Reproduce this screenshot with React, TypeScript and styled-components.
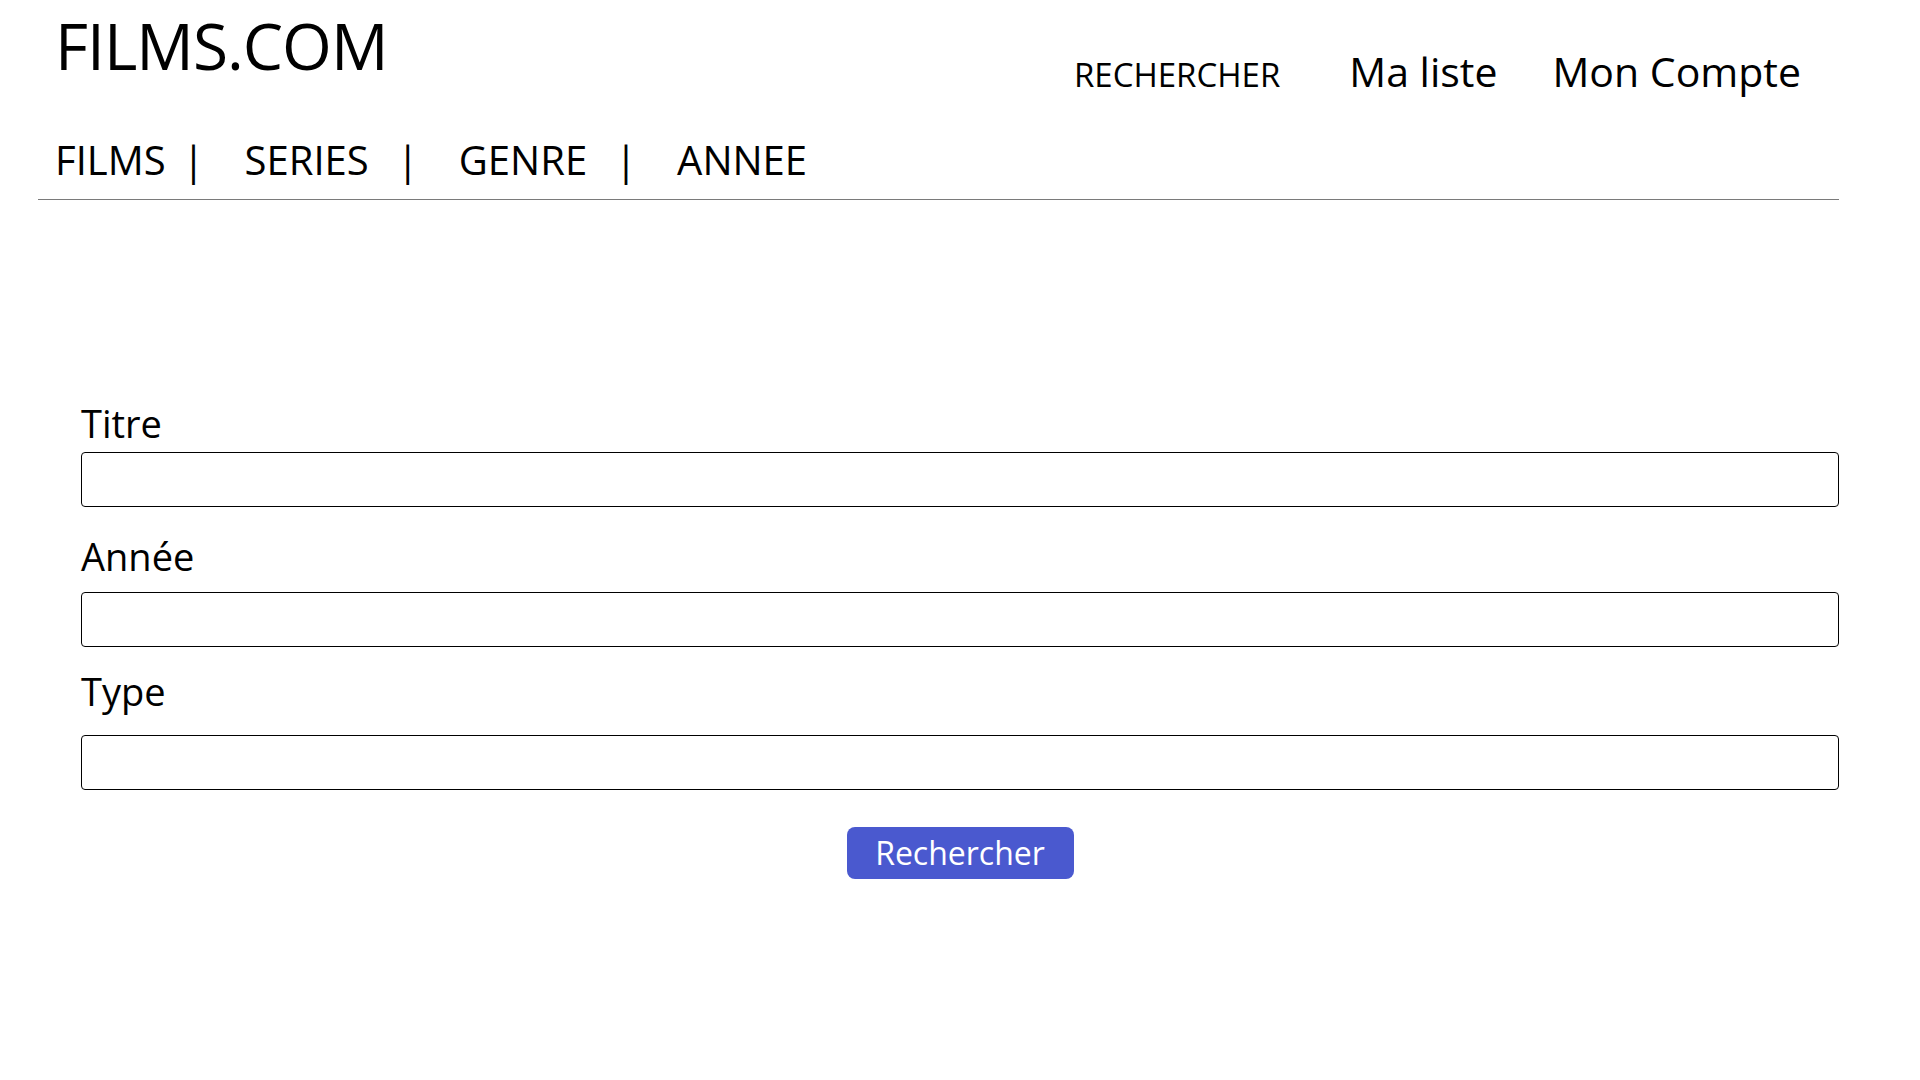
import React from "react";
import styled, { createGlobalStyle } from "styled-components";

const GlobalStyle = createGlobalStyle`
  html, body {
    margin: 0;
    padding: 0;
    background: #ffffff;
    color: #000000;
    font-family: "Open Sans", "Noto Sans", Arial, sans-serif;
  }
  * { box-sizing: border-box; }
`;

const Header = styled.header`
  padding: 0 81px 0 38px;
`;

const TopRow = styled.div`
  display: flex;
  justify-content: space-between;
  align-items: flex-start;
  padding-left: 17px;
`;

const Logo = styled.h1`
  margin: 0;
  padding-top: 13px;
  font-size: 64px;
  font-weight: 400;
  line-height: 66px;
  letter-spacing: -1px;
`;

const AccountNav = styled.nav`
  display: flex;
  align-items: baseline;
  margin-top: 51px;
  margin-right: 38px;
`;

const AccountLink = styled.a<{ $size: number; $space: number }>`
  font-size: ${(p) => p.$size}px;
  line-height: 1;
  margin-right: ${(p) => p.$space}px;
  color: #000;
  text-decoration: none;
  cursor: pointer;
  &:last-child { margin-right: 0; }
`;

const CategoryNav = styled.nav`
  display: flex;
  align-items: baseline;
  margin-top: 48px;
  padding-left: 17px;
`;

const CategoryLink = styled.a`
  font-size: 40px;
  line-height: 1;
  color: #000;
  text-decoration: none;
  cursor: pointer;
`;

const Separator = styled.span<{ $lead: number }>`
  font-size: 40px;
  line-height: 1;
  margin: 0 40px 0 ${(p) => p.$lead}px;
`;

const Divider = styled.hr`
  margin: 19px 0 0;
  border: 0;
  border-top: 1px solid #7a7a7a;
  height: 0;
`;

const Form = styled.form`
  display: flex;
  flex-direction: column;
  margin-top: 204px;
  padding: 0 81px;
`;

const Field = styled.div<{ $top: number; $labelGap: number }>`
  display: flex;
  flex-direction: column;
  margin-top: ${(p) => p.$top}px;
  & > input {
    margin-top: ${(p) => p.$labelGap}px;
  }
`;

const Label = styled.label`
  font-size: 38px;
  line-height: 1;
  color: #000;
`;

const Input = styled.input`
  width: 100%;
  height: 55px;
  border: 1px solid #000;
  border-radius: 4px;
  background: #fff;
  font-family: inherit;
  font-size: 24px;
  padding: 0 12px;
  outline: none;
`;

const SubmitRow = styled.div`
  display: flex;
  justify-content: center;
  margin-top: 37px;
`;

const SubmitButton = styled.button`
  width: 227px;
  height: 52px;
  border: 0;
  border-radius: 8px;
  background: #4a59cf;
  color: #ffffff;
  font-family: inherit;
  font-size: 32px;
  line-height: 1;
  cursor: pointer;
`;

const categories = [
  { name: "FILMS", lead: 17 },
  { name: "SERIES", lead: 28 },
  { name: "GENRE", lead: 28 },
  { name: "ANNEE", lead: 0 },
];

const fields = [
  { label: "Titre", top: 0, gap: 10 },
  { label: "Année", top: 30, gap: 17 },
  { label: "Type", top: 25, gap: 25 },
];

export default function App() {
  return (
    <>
      <GlobalStyle />
      <Header>
        <TopRow>
          <Logo>FILMS.COM</Logo>
          <AccountNav>
            <AccountLink $size={33} $space={69}>RECHERCHER</AccountLink>
            <AccountLink $size={41} $space={55}>Ma liste</AccountLink>
            <AccountLink $size={41} $space={0}>Mon Compte</AccountLink>
          </AccountNav>
        </TopRow>
        <CategoryNav>
          {categories.map((c, i) => (
            <React.Fragment key={c.name}>
              <CategoryLink>{c.name}</CategoryLink>
              {i < categories.length - 1 && <Separator $lead={c.lead}>|</Separator>}
            </React.Fragment>
          ))}
        </CategoryNav>
        <Divider />
      </Header>
      <Form onSubmit={(e) => e.preventDefault()}>
        {fields.map((f) => (
          <Field key={f.label} $top={f.top} $labelGap={f.gap}>
            <Label>{f.label}</Label>
            <Input type="text" />
          </Field>
        ))}
        <SubmitRow>
          <SubmitButton type="submit">Rechercher</SubmitButton>
        </SubmitRow>
      </Form>
    </>
  );
}
